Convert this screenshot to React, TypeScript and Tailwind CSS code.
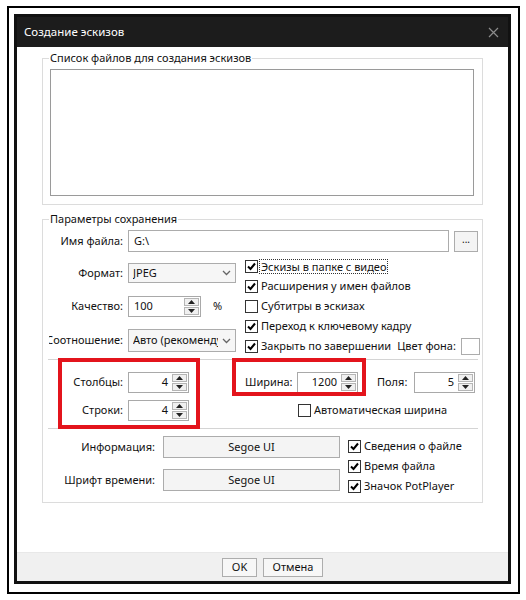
import type { ReactNode } from 'react';

const font = "font-['Noto_Sans','DejaVu_Sans',sans-serif]";

function Check({ checked }: { checked: boolean }) {
  return (
    <span className="flex h-[13px] w-[13px] shrink-0 items-center justify-center border border-[#333] bg-white">
      {checked && (
        <svg width="11" height="11" viewBox="0 0 11 11">
          <path d="M2 5.5 L4.5 8 L9 2.5" fill="none" stroke="#000" strokeWidth="2" />
        </svg>
      )}
    </span>
  );
}

function CheckRow({ checked, focus, children }: { checked: boolean; focus?: boolean; children: ReactNode }) {
  return (
    <div className="flex h-[20px] items-center whitespace-nowrap">
      <Check checked={checked} />
      <span className={focus ? 'ml-[1px] border border-dotted border-[#333] px-[1px] leading-[13px]' : 'ml-[3px]'}>
        {children}
      </span>
    </div>
  );
}

function Spin({ value, width, align = 'right' }: { value: string; width: string; align?: 'left' | 'right' }) {
  return (
    <div className={`flex h-[21px] items-stretch border border-[#a9a9a9] bg-white ${width}`}>
      <div className={`flex flex-1 items-center ${align === 'right' ? 'justify-end pr-[4px]' : 'pl-[5px]'}`}>
        {value}
      </div>
      <div className="flex w-[16px] flex-col gap-[1px] py-[1px] pr-[1px]">
        <div className="flex flex-1 items-center justify-center border border-[#b5b5b5] bg-[#f0f0f0]">
          <svg width="7" height="4" viewBox="0 0 7 4">
            <path d="M0 4 L3.5 0 L7 4 Z" fill="#222" />
          </svg>
        </div>
        <div className="flex flex-1 items-center justify-center border border-[#b5b5b5] bg-[#f0f0f0]">
          <svg width="7" height="4" viewBox="0 0 7 4">
            <path d="M0 0 L3.5 4 L7 0 Z" fill="#222" />
          </svg>
        </div>
      </div>
    </div>
  );
}

function Select({ value, height }: { value: string; height: string }) {
  return (
    <div className={`flex w-[108px] items-center overflow-hidden border border-[#acacac] bg-[#f6f6f6] pl-[4px] ${height}`}>
      <span className="flex-1 overflow-hidden whitespace-nowrap">{value}</span>
      <svg className="mx-[4px] shrink-0" width="9" height="6" viewBox="0 0 9 6">
        <path d="M1 1 L4.5 4.5 L8 1" fill="none" stroke="#666" strokeWidth="1.3" />
      </svg>
    </div>
  );
}

function Label({ w, children }: { w: string; children: ReactNode }) {
  return <div className={`shrink-0 whitespace-nowrap text-right ${w}`}>{children}</div>;
}

export default function App() {
  return (
    <div className={`h-[600px] w-[526px] bg-white pl-[7px] pt-[6px] text-[11px] text-[#111] ${font}`}>
      <div className="h-[588px] w-[513px] border-2 border-black pl-[5px] pt-[6px]">
        <div className="flex h-[570px] w-[497px] flex-col border-[3px] border-[#111] bg-white">
          {/* title bar */}
          <div className="flex h-[30px] shrink-0 items-center justify-between bg-[#1c1c1c] pl-[7px] pr-[9px]">
            <span className="text-[11.5px] text-white">Создание эскизов</span>
            <svg width="11" height="11" viewBox="0 0 11 11">
              <path d="M1 1 L10 10 M10 1 L1 10" stroke="#8c8c8c" strokeWidth="1.2" />
            </svg>
          </div>

          {/* content */}
          <div className="flex-1">
            <fieldset className="ml-[25px] mt-[3px] w-[441px] border border-[#dcdcdc] pb-[8px] pl-[7px]">
              <legend className="ml-[-1px] px-[1px] leading-[16px]">Список файлов для создания эскизов</legend>
              <div className="mt-[3px] h-[127px] w-[424px] border border-[#9a9a9a] bg-white" />
            </fieldset>

            <fieldset className="ml-[25px] mt-[6px] w-[441px] border border-[#dcdcdc] pb-[6px]">
              <legend className="ml-[6px] px-[1px] leading-[16px]">Параметры сохранения</legend>

              <div className="mt-[3px] flex items-center">
                <Label w="w-[80px]">Имя файла:</Label>
                <div className="ml-[5px] flex h-[22px] w-[321px] items-center border border-[#acacac] bg-white pl-[5px]">
                  G:\
                </div>
                <div className="ml-[5px] flex h-[21px] w-[24px] items-center justify-center border border-[#acacac] bg-[#f4f4f4] pb-[3px] text-[10px]">
                  ...
                </div>
              </div>

              <div className="mt-[4px] flex">
                <div className="w-[202px] shrink-0">
                  <div className="mt-[7px] flex h-[20px] items-center">
                    <Label w="w-[80px]">Формат:</Label>
                    <div className="ml-[5px]">
                      <Select value="JPEG" height="h-[20px]" />
                    </div>
                  </div>
                  <div className="mt-[13px] flex h-[21px] items-center">
                    <Label w="w-[80px]">Качество:</Label>
                    <div className="ml-[5px]">
                      <Spin value="100" width="w-[73px]" align="left" />
                    </div>
                    <span className="ml-[12px]">%</span>
                  </div>
                  <div className="mt-[12px] flex h-[23px] items-center">
                    <div className="ml-[6px] flex w-[74px] shrink-0 justify-end overflow-hidden">
                      <span className="shrink-0 whitespace-nowrap">Соотношение:</span>
                    </div>
                    <div className="ml-[5px]">
                      <Select value="Авто (рекомендуется)" height="h-[23px]" />
                    </div>
                  </div>
                </div>
                <div className="flex shrink-0 flex-col whitespace-nowrap">
                  <CheckRow checked focus>Эскизы в папке с видео</CheckRow>
                  <CheckRow checked>Расширения у имен файлов</CheckRow>
                  <CheckRow checked={false}>Субтитры в эскизах</CheckRow>
                  <CheckRow checked>Переход к ключевому кадру</CheckRow>
                  <div className="flex h-[20px] items-center">
                    <Check checked />
                    <span className="ml-[3px]">Закрыть по завершении</span>
                    <span className="ml-[6px]">Цвет фона:</span>
                    <div className="ml-[5px] h-[17px] w-[19px] border border-[#acacac] bg-white" />
                  </div>
                </div>
              </div>

              <div className="relative">
                <div className="ml-[5px] mt-[3px] h-px w-[430px] bg-[#d4d4d4]" />

                <div className="mt-[12px] flex h-[20px] items-center">
                  <div className="flex w-[202px] shrink-0 items-center">
                    <Label w="w-[80px]">Столбцы:</Label>
                    <div className="ml-[5px]">
                      <Spin value="4" width="w-[61px]" />
                    </div>
                  </div>
                  <Label w="w-[45px]">Ширина:</Label>
                  <div className="ml-[7px]">
                    <Spin value="1200" width="w-[61px]" />
                  </div>
                  <span className="ml-[19px] w-[37px] shrink-0">Поля:</span>
                  <Spin value="5" width="w-[61px]" />
                </div>

                <div className="mt-[8px] flex h-[20px] items-center">
                  <div className="flex w-[202px] shrink-0 items-center">
                    <Label w="w-[80px]">Строки:</Label>
                    <div className="ml-[5px]">
                      <Spin value="4" width="w-[61px]" />
                    </div>
                  </div>
                  <div className="ml-[53px] flex items-center whitespace-nowrap">
                    <Check checked={false} />
                    <span className="ml-[3px]">Автоматическая ширина</span>
                  </div>
                </div>

                <div className="ml-[5px] mt-[8px] h-px w-[430px] bg-[#d4d4d4]" />

                {/* red annotation frames */}
                <div className="absolute left-[15px] top-[-1px] h-[71px] w-[142px] border-4 border-[#e3141c]" />
                <div className="absolute left-[189px] top-[-1px] h-[38px] w-[134px] border-4 border-[#e3141c]" />
              </div>

              <div className="mt-[7px] flex">
                <div className="shrink-0">
                  <div className="flex h-[22px] items-center">
                    <Label w="w-[112px]">Информация:</Label>
                    <div className="ml-[8px] flex h-[22px] w-[177px] items-center justify-center border border-[#acacac] bg-[#f4f4f4]">
                      Segoe UI
                    </div>
                  </div>
                  <div className="mt-[11px] flex h-[22px] items-center">
                    <Label w="w-[112px]">Шрифт времени:</Label>
                    <div className="ml-[8px] flex h-[22px] w-[177px] items-center justify-center border border-[#acacac] bg-[#f4f4f4]">
                      Segoe UI
                    </div>
                  </div>
                </div>
                <div className="ml-[8px] flex flex-col">
                  <CheckRow checked>Сведения о файле</CheckRow>
                  <CheckRow checked>Время файла</CheckRow>
                  <CheckRow checked>Значок PotPlayer</CheckRow>
                </div>
              </div>
            </fieldset>
          </div>

          {/* footer */}
          <div className="flex h-[29px] shrink-0 border-t border-[#e8e8e8] bg-[#f0f0f0] pl-[205px] pt-[5px]">
            <div className="flex h-[19px] w-[35px] items-center justify-center border border-[#adadad] bg-[#f7f7f7]">
              OK
            </div>
            <div className="ml-[6px] flex h-[19px] w-[60px] items-center justify-center border border-[#adadad] bg-[#f7f7f7]">
              Отмена
            </div>
          </div>
        </div>
      </div>
    </div>
  );
}
